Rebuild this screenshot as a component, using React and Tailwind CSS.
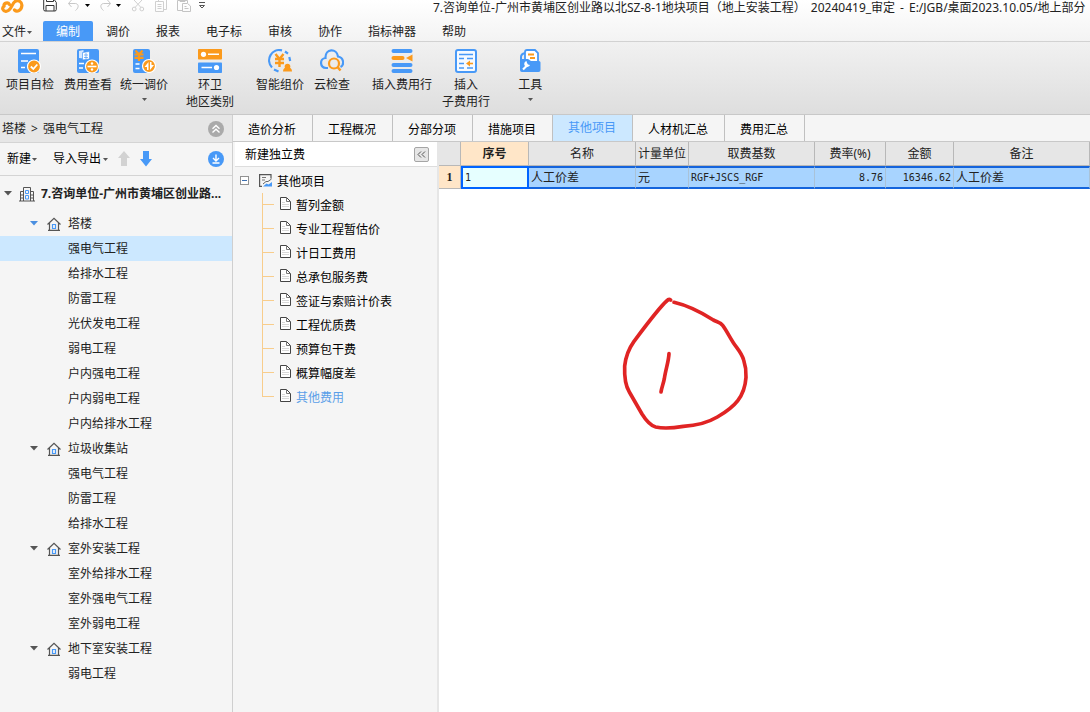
import { useState } from 'react'
import { clsx } from 'clsx'

const BLUE = '#4899f7'
const ORANGE = '#fb9a1c'

const menus = ['编制', '调价', '报表', '电子标', '审核', '协作', '指标神器', '帮助']

const tabs = ['造价分析', '工程概况', '分部分项', '措施项目', '其他项目', '人材机汇总', '费用汇总']

const projectTree = [
    {
        name: '塔楼',
        items: ['强电气工程', '给排水工程', '防雷工程', '光伏发电工程', '弱电工程', '户内强电工程', '户内弱电工程', '户内给排水工程'],
    },
    { name: '垃圾收集站', items: ['强电气工程', '防雷工程', '给排水工程'] },
    { name: '室外安装工程', items: ['室外给排水工程', '室外强电气工程', '室外弱电工程'] },
    { name: '地下室安装工程', items: ['弱电工程'] },
]

const feeItems = ['暂列金额', '专业工程暂估价', '计日工费用', '总承包服务费', '签证与索赔计价表', '工程优质费', '预算包干费', '概算幅度差', '其他费用']

const columns = ['名称', '计量单位', '取费基数', '费率(%)', '金额', '备注']

function Caret({ className = 'text-[#555]' }) {
    return (
        <svg viewBox="0 0 5 3" className={clsx('h-[3px] w-[5px] shrink-0', className)} aria-hidden="true">
            <path d="M0 0h5L2.5 3z" fill="currentColor" />
        </svg>
    )
}

function TreeArrow({ active }) {
    return (
        <svg viewBox="0 0 8 5" className={clsx('h-[5px] w-2 shrink-0', active ? 'text-[#4a8fe0]' : 'text-[#555]')} aria-hidden="true">
            <path d="M0 0h8L4 4.5z" fill="currentColor" />
        </svg>
    )
}

function Logo() {
    return (
        <svg viewBox="0 0 24 14" className="h-3.5 w-6 shrink-0" fill="none" stroke={ORANGE} strokeWidth="3.2" strokeLinecap="round" aria-hidden="true">
            <path d="M9.500 4.500C8 1.800 3.500 3 4 6.300C1.500 8 3 11.500 6 11.300C11.500 11 11.500 4 15 1.500C18.500-.5 22.500 2 21.800 6C21.300 10.500 17 12.500 14.500 10" />
        </svg>
    )
}

function QuickIcon({ label, className, children }) {
    return (
        <button type="button" aria-label={label} className={className}>
            <svg viewBox="0 0 14 12" className="h-3 w-3.5" fill="none" stroke="currentColor" aria-hidden="true">
                {children}
            </svg>
        </button>
    )
}

function QuickAccess() {
    return (
        <div className="flex w-[433px] shrink-0 items-start">
            <Logo />
            <QuickIcon label="保存" className="ml-[19px] text-[#333]">
                <path d="M.7 0v9.500q0 1.500 1.500 1.500h9.600q1.500 0 1.500-1.500V2.500L11.500 0M3.500 0v1.500h7V0M3 11V5.500h8V11" />
            </QuickIcon>
            <QuickIcon label="撤销" className="ml-2.5 text-[#c8c8c8]">
                <path d="M4.500 0 1.500 3.500 4.500 7M1.500 3.500H7c5-.5 5.500 4 1.500 7" />
            </QuickIcon>
            <Caret className="mt-1 ml-1 text-black" />
            <QuickIcon label="恢复" className="ml-2 text-[#c8c8c8]">
                <path d="M9.500 0l3 3.500-3 3.500M12.500 3.500H7c-5-.5-5.500 4-1.500 7" />
            </QuickIcon>
            <Caret className="mt-1 ml-1 text-black" />
            <QuickIcon label="剪切" className="ml-2.5 text-[#d0d0d0]">
                <path d="M3 0l7 7.500M11 0 4 7.500" />
                <circle cx="3.200" cy="9" r="1.900" />
                <circle cx="10.800" cy="9" r="1.900" />
            </QuickIcon>
            <QuickIcon label="复制" className="ml-2.5 text-[#d0d0d0]">
                <path d="M.5 1.500h8v10h-8zM3.500 1V0M11.500 0v9.500h-3M2.500 4.500h4M2.500 6.500h4M2.500 8.500h4" />
            </QuickIcon>
            <QuickIcon label="粘贴" className="ml-2 text-[#c4c4c4]">
                <path d="M5 10.500H.5V.5h10V3M3 0v1.500h5V0M5.500 3.500h5l3 2.500v5.500h-8zM7.500 6.500h2M7.500 8.500h4" />
            </QuickIcon>
            <QuickIcon label="自定义" className="ml-1 text-[#555]">
                <path d="M4 2.500h6M4.500 5.500h5L7 8z" />
            </QuickIcon>
        </div>
    )
}

const badge = <circle cx="16" cy="17.500" r="6.500" fill={ORANGE} stroke="#fff" strokeWidth="1.200" />

const ribbonIcons = {
    check: (
        <>
            <rect x="0" y="0" width="21" height="24" rx="2" fill={BLUE} />
            <path d="M3 4.500h15M3 12h7M3 18.500h4" stroke="#fff" strokeWidth="1.600" />
            {badge}
            <path d="M12.800 17.500l2.500 2.500 4-4.500" stroke="#fff" strokeWidth="1.800" fill="none" />
        </>
    ),
    view: (
        <>
            <rect x="1" y="0" width="22" height="24" rx="2" fill={BLUE} />
            <path d="M3 2l4.500-1v8.500L3 9z" fill="#d5e8ff" />
            <path d="M6.500 3.500l7-1v7.500l-7 1z" fill="#fff" stroke={BLUE} strokeWidth=".7" />
            <path d="M8 6h4M8 8.500h4M10 4v6" stroke={BLUE} strokeWidth=".7" />
            <path d="M3 14.500h5M3 19h4" stroke="#fff" strokeWidth="1.600" />
            {badge}
            <path d="M11.500 17.500h9" stroke="#fff" strokeWidth="1.600" />
            <circle cx="16" cy="14.500" r="1.200" fill="#fff" />
            <circle cx="16" cy="20.500" r="1.200" fill="#fff" />
        </>
    ),
    price: (
        <>
            <rect x="1" y="0" width="17" height="24" rx="2" fill={BLUE} />
            <path d="M3.500 1.500 7 5.500l3.500-4M7 5.500V12M2.500 5.500h9M2.500 8.800h9" stroke={ORANGE} strokeWidth="2.200" fill="none" />
            <path d="M3.500 15h4M3.500 19.500h4" stroke="#fff" strokeWidth="1.600" />
            <circle cx="17" cy="17" r="6.500" fill={ORANGE} stroke="#fff" strokeWidth="1.200" />
            <path d="M16.500 13v8H15v-3h-2.500zM18 21v-8h1.500v3H22z" fill="#fff" />
        </>
    ),
    region: (
        <>
            <rect x="0" y="0" width="24" height="10.500" rx=".8" fill={ORANGE} />
            <rect x="0" y="13.500" width="24" height="10.500" rx=".8" fill={BLUE} />
            <circle cx="5.500" cy="5.300" r="2.600" fill="#fff" />
            <circle cx="18.500" cy="18.500" r="2.600" fill="#fff" />
            <path d="M10 5.300h11M3.500 18.500H14" stroke="#fff" strokeWidth="1.600" />
        </>
    ),
    smart: (
        <>
            <g fill="none" stroke={BLUE} strokeWidth="2.200">
                <path d="M4 18.500A10.300 10.300 0 0 1 14 1.400M6 20.500l4.500 2M17 2.500l3 2.200M21.300 8l.9 4" />
            </g>
            <path d="M7.500 5l4 5 4-5M11.500 10v8M7 10h9M7 14h9" stroke={ORANGE} strokeWidth="2.400" fill="none" />
            <circle cx="19.500" cy="17.500" r="2.800" fill={ORANGE} />
            <path d="M15 22.500c0-3 2-4.500 4.500-4.500s4.500 1.500 4.500 4.500z" fill={ORANGE} />
        </>
    ),
    cloud: (
        <>
            <path d="M8 19H6C-.5 18.500-.5 9.500 5.500 9 5 -1 17 -1 18 7.500c6 1 6.500 8.500 2.500 10.500" stroke={BLUE} strokeWidth="2.200" fill="none" />
            <circle cx="14" cy="14.500" r="5" stroke={ORANGE} strokeWidth="2.200" fill="none" />
            <path d="M17.500 18l3 3.500" stroke={ORANGE} strokeWidth="2.500" />
        </>
    ),
    insertRow: (
        <>
            <path d="M3.500 2h17M3.500 16h17M3.500 22h17" stroke={BLUE} strokeWidth="4" strokeLinecap="round" />
            <path d="M3.500 9h9" stroke={ORANGE} strokeWidth="4" strokeLinecap="round" />
            <path d="M22.500 5.500v7L16 9z" fill={ORANGE} />
        </>
    ),
    insertChild: (
        <>
            <rect x="2" y="1" width="20" height="22" rx="2" stroke={BLUE} strokeWidth="2" fill="#f6faff" />
            <path d="M5 5.500h14M5 9.500h5M13 9.500h6M5 14.500h5M5 19h5M13 19h6" stroke={BLUE} strokeWidth="1.500" />
            <path d="M14 14.500h5" stroke={ORANGE} strokeWidth="1.600" />
            <path d="M12 14.500l4-3v6z" fill={ORANGE} />
        </>
    ),
    tools: (
        <>
            <path d="M3 14V8q0-3 4-4" stroke={BLUE} strokeWidth="2" fill="none" />
            <path d="M7 14V3q0-2 2-2h8l3 3v10z" stroke={BLUE} strokeWidth="1.800" fill="#fff" />
            <path d="M10 5.500h6M12 9h5" stroke={ORANGE} strokeWidth="1.800" />
            <path d="M2 12q0-2 2-2h6l3 2h8q1.500 0 1.500 1.500V21q0 2-2 2H4q-2 0-2-2z" fill={BLUE} />
            <path d="M5 20.500l4-4" stroke="#fff" strokeWidth="2.200" />
            <path d="M8.500 12a3 3 0 1 0 3.500 4l-2-.5-1-1.500z" fill="#fff" />
        </>
    ),
}

const ribbon = [
    { icon: 'check', lines: ['项目自检'], className: 'ml-1.5' },
    { icon: 'view', lines: ['费用查看'], className: 'ml-2.5' },
    { icon: 'price', lines: ['统一调价'], caret: true, className: 'ml-2' },
    { icon: 'region', lines: ['环卫', '地区类别'], className: 'ml-4.5' },
    { icon: 'smart', lines: ['智能组价'], className: 'ml-5.5' },
    { icon: 'cloud', lines: ['云检查'], className: 'ml-2.5' },
    { icon: 'insertRow', lines: ['插入费用行'], className: 'ml-5.5' },
    { icon: 'insertChild', lines: ['插入', '子费用行'], className: 'ml-2.5' },
    { icon: 'tools', lines: ['工具'], caret: true, className: 'ml-7' },
]

function RibbonButton({ item }) {
    return (
        <button type="button" className={clsx('flex shrink-0 flex-col items-center pt-[7px]', item.className)}>
            <svg viewBox="0 0 24 24" className="h-6 w-6" aria-hidden="true">{ribbonIcons[item.icon]}</svg>
            <span className="mt-[3px] leading-[17px]">
                {item.lines.map((line) => (
                    <span key={line} className="block">{line}</span>
                ))}
            </span>
            {item.caret && <Caret className="mt-[5px] text-[#555]" />}
        </button>
    )
}

function HouseIcon() {
    return (
        <svg viewBox="0 0 14 14" className="h-3.5 w-3.5 shrink-0" fill="none" aria-hidden="true">
            <path d="M.5 7.500 7 1.300l6.500 6.200M2.500 6v7.500M11.500 6v7.500M1 13.300h12" stroke="#555" strokeWidth="1.200" />
            <path d="M5.500 7.500h3v4h-3z" stroke={BLUE} strokeWidth="1.200" />
        </svg>
    )
}

function BuildingIcon() {
    return (
        <svg viewBox="0 0 16 16" className="h-4 w-4 shrink-0" fill="none" aria-hidden="true">
            <path d="M4.500 15V1.500h7V15M4.500 5.500h-3V15M11.500 5.500h3V15M0 15h16M1.500 9h3M1.500 12h3M11.500 9h3M11.500 12h3" stroke="#555" />
            <path d="M6.500 4.500h3v3h-3zM6.500 9.500h3V13h-3z" stroke={BLUE} />
        </svg>
    )
}

function DocIcon() {
    return (
        <svg viewBox="0 0 11 13" className="mb-1 h-[13px] w-[11px] shrink-0" aria-hidden="true">
            <path d="M.5.500h6l4 4v8H.5z" fill="#fff" stroke="#444" />
            <path d="M6.500 1v3.500H10" fill="none" stroke="#777" />
            <path d="M2 5.500h3M2 7.500h7M2 9.500h7" stroke="#d8d8d8" />
        </svg>
    )
}

function ProjectSidebar({ selected, onSelect }) {
    return (
        <aside className="w-[233px] shrink-0 border-r border-[#cfcfcf] bg-[#f5f5f5]">
            <div className="flex h-7 items-center border-b border-[#d4d4d4] bg-[#e6e6e6] pr-2 pl-0.5">
                <span className="flex gap-[5px]">
                    <span>塔楼</span>
                    <span>&gt;</span>
                    <span>强电气工程</span>
                </span>
                <button type="button" aria-label="收起" className="ml-auto">
                    <svg viewBox="0 0 16 16" className="h-4 w-4" fill="none" aria-hidden="true">
                        <circle cx="8" cy="8" r="8" fill="#aaa" />
                        <path d="M4.500 7.800 8 4.500l3.500 3.300M4.500 11.500 8 8.200l3.500 3.300" stroke="#fff" strokeWidth="1.400" />
                    </svg>
                </button>
            </div>
            <div className="flex h-[33px] items-center border-b border-[#d4d4d4] pr-2 pl-[7px]">
                <button type="button" className="flex items-center gap-px text-black">新建<Caret /></button>
                <button type="button" className="ml-4 flex items-center gap-0.5 text-black">导入导出<Caret /></button>
                <button type="button" aria-label="上移" className="ml-2.5">
                    <svg viewBox="0 0 12 16" className="h-4 w-3" aria-hidden="true"><path d="M6 0l6 7H9v8H3V7H0z" fill="#d2d2d2" /></svg>
                </button>
                <button type="button" aria-label="下移" className="ml-2.5">
                    <svg viewBox="0 0 12 16" className="h-4 w-3" aria-hidden="true"><path d="M3 0h6v8h3l-6 7.500L0 8h3z" fill={BLUE} /></svg>
                </button>
                <button type="button" aria-label="下载" className="ml-auto">
                    <svg viewBox="0 0 16 16" className="h-4 w-4" fill="none" stroke="#fff" strokeWidth="1.400" aria-hidden="true">
                        <circle cx="8" cy="8" r="8" fill={BLUE} stroke="none" />
                        <path d="M8 3.500V10M5 7l3 3 3-3M4.500 12h7" />
                    </svg>
                </button>
            </div>
            <button type="button" className="flex h-[35px] w-full items-center pr-1.5 pl-1 text-left font-bold">
                <TreeArrow />
                <span className="ml-[7px] flex"><BuildingIcon /></span>
                <span className="ml-1.5 truncate">7.咨询单位-广州市黄埔区创业路...</span>
            </button>
            <ul>
                {projectTree.map((group, index) => (
                    <li key={group.name}>
                        <button type="button" className="flex h-[25px] w-full items-center pl-[30px]">
                            <TreeArrow active={index === 0} />
                            <span className="mr-[7px] ml-[9px] flex"><HouseIcon /></span>
                            {group.name}
                        </button>
                        <ul>
                            {group.items.map((name) => {
                                const key = `${group.name}/${name}`
                                return (
                                    <li key={key}>
                                        <button
                                            type="button"
                                            onClick={() => onSelect(key)}
                                            className={clsx('flex h-[25px] w-full items-center pl-[68px]', selected === key && 'bg-[#cce8ff]')}
                                        >
                                            {name}
                                        </button>
                                    </li>
                                )
                            })}
                        </ul>
                    </li>
                ))}
            </ul>
        </aside>
    )
}

function FeePanel({ selected, onSelect }) {
    return (
        <section className="w-[206px] shrink-0 border-r-2 border-[#e6e6e6] bg-[#f5f5f5] text-black">
            <div className="ml-0.5 flex h-[25px] items-center border-b border-[#ddd] bg-white pr-2 pl-2.5">
                <button type="button" className="pt-0.5">新建独立费</button>
                <button type="button" aria-label="折叠" className="ml-auto flex h-[15px] w-[15px] items-center justify-center rounded-xs border border-[#a5a5a5] bg-[#e6e6e6]">
                    <svg viewBox="0 0 9 7" className="h-[7px] w-[9px]" fill="none" stroke="#555" aria-hidden="true">
                        <path d="M4 .5l-3 3 3 3M8 .5l-3 3 3 3" />
                    </svg>
                </button>
            </div>
            <div className="mt-px flex h-[25px] items-center pl-[7px]">
                <button type="button" aria-label="展开" className="flex h-[9px] w-[9px] items-center justify-center border border-[#929292] bg-white">
                    <span className="h-px w-[5px] bg-[#3c6fb0]" />
                </button>
                <svg viewBox="0 0 13 13" className="ml-2.5 h-[13px] w-[13px]" fill="none" aria-hidden="true">
                    <path d="M12 4.500V.6H.6v11.800H3" stroke="#555" strokeWidth="1.200" />
                    <path d="M3 3.500h4M3 6h3" stroke="#777" />
                    <path d="M4 12.500 7.500 9.500l2 1L13 8v4.500z" fill={BLUE} />
                    <path d="M4 10 7 7.500h2L12.500 5" stroke="#666" />
                </svg>
                <span className="ml-[5px] pt-0.5">其他项目</span>
            </div>
            <ul className="pl-[29px]">
                {feeItems.map((name, index) => (
                    <li key={name} className="flex h-6">
                        <span className="flex w-3 flex-col">
                            <span className="h-3 border-b border-l border-[#f8cd8c]" />
                            {index < feeItems.length - 1 && <span className="h-3 border-l border-[#f8cd8c]" />}
                        </span>
                        <button
                            type="button"
                            onClick={() => onSelect(name)}
                            className={clsx('ml-1.5 flex items-center gap-[5px]', selected === name && 'text-[#5b9fe8]')}
                        >
                            <DocIcon />
                            <span className="pt-0.5">{name}</span>
                        </button>
                    </li>
                ))}
            </ul>
        </section>
    )
}

const headCell = 'h-6 border-r border-b border-[#b8b8b8] bg-[#e6e6e6] p-0 font-normal'
const bodyCell = 'h-[23px] border-y-2 border-y-[#1464dc] border-r border-r-[#a9c2d8] bg-[#a8d4ff] px-0.5 py-0 whitespace-nowrap'
const mono = "font-['DejaVu_Sans_Mono','Noto_Sans_CJK_SC',monospace] text-[10px]"

function FeeTable() {
    return (
        <table className="w-full table-fixed border-separate border-spacing-0">
            <colgroup>
                <col className="w-[22px]" />
                <col className="w-[68px]" />
                <col className="w-[107px]" />
                <col className="w-[53px]" />
                <col className="w-[126px]" />
                <col className="w-[71px]" />
                <col className="w-[68px]" />
                <col />
            </colgroup>
            <thead>
                <tr>
                    <td className={headCell} />
                    <th className="h-6 border-r border-b border-[#b8b8b8] bg-[#ffe6c8] p-0 font-bold">序号</th>
                    {columns.map((name) => (
                        <th key={name} className={headCell}>{name}</th>
                    ))}
                </tr>
            </thead>
            <tbody>
                <tr>
                    <th className="border-r border-b border-[#b8b8b8] bg-[#ffe6c8] p-0 font-['Liberation_Serif',serif] text-xs font-bold">1</th>
                    <td className={clsx('border-2 border-[#0064ff] bg-[#e6ffff] px-0.5 py-0', mono)}>1</td>
                    <td className={bodyCell}>人工价差</td>
                    <td className={bodyCell}>元</td>
                    <td className={clsx(bodyCell, mono)}>RGF+JSCS_RGF</td>
                    <td className={clsx(bodyCell, mono, 'text-right')}>8.76</td>
                    <td className={clsx(bodyCell, mono, 'text-right')}>16346.62</td>
                    <td className={bodyCell}>人工价差</td>
                </tr>
            </tbody>
        </table>
    )
}

// red pen mark lying over the empty part of the grid
function PenMark() {
    return (
        <svg
            viewBox="0 0 510 510"
            className="pointer-events-none absolute top-[138px] left-[161px] h-[170px] w-[170px]"
            fill="none"
            stroke="#e02424"
            strokeWidth="11"
            strokeLinecap="round"
            strokeLinejoin="round"
            aria-hidden="true"
        >
            <path d="M222 67C270 78 305 98 340 120C352 126 361 127 368 136C380 152 388 170 400 188C412 206 425 218 431 240C437 258 439 275 438 292C434 350 405 380 352 411C320 430 285 437 250 439C220 444 190 446 167 441C148 436 136 418 126 402L88 336C75 315 73 285 74 258C77 230 87 205 102 184C135 140 178 82 200 63Q206 56 212 60" />
            <path d="M207 221C206 245 197 268 193 296C190 312 185 322 183 336" />
        </svg>
    )
}

export default function App() {
    const [menu, setMenu] = useState('编制')
    const [tab, setTab] = useState('其他项目')
    const [node, setNode] = useState('塔楼/强电气工程')
    const [fee, setFee] = useState('其他费用')

    return (
        <div className="flex h-screen flex-col overflow-hidden bg-white font-['Noto_Sans','Noto_Sans_CJK_SC',sans-serif] text-xs text-[#222]">
            <header className="shrink-0 border-b border-[#d2d2d2] bg-linear-to-b from-white to-[#f3f3f3]">
                <div className="flex h-[21px] items-start">
                    <QuickAccess />
                    <h1 className="flex gap-[5px] leading-4 whitespace-nowrap">
                        <span>7.咨询单位-广州市黄埔区创业路以北SZ-8-1地块项目（地上安装工程）</span>
                        <span>20240419_审定</span>
                        <span>-</span>
                        <span>E:/JGB/桌面2023.10.05/地上部分</span>
                    </h1>
                </div>
                <nav className="flex h-5">
                    <button type="button" className="flex w-[43px] items-center gap-px pt-0.5 pl-0.5">文件<Caret /></button>
                    {menus.map((name) => (
                        <button
                            key={name}
                            type="button"
                            onClick={() => setMenu(name)}
                            className={clsx('px-[13px] pt-0.5', menu === name && 'rounded-t-xs bg-[#4899f7] text-white')}
                        >
                            {name}
                        </button>
                    ))}
                </nav>
            </header>

            <div className="flex h-[73px] shrink-0 items-start border-b border-[#c8c8c8] bg-linear-to-b from-[#f1f1f1] to-[#dedede]">
                {ribbon.map((item) => (
                    <RibbonButton key={item.icon} item={item} />
                ))}
            </div>

            <div className="flex min-h-0 flex-1">
                <ProjectSidebar selected={node} onSelect={setNode} />
                <main className="flex min-w-0 flex-1 flex-col">
                    <div className="flex h-[27px] shrink-0 border-b border-[#c8c8c8] bg-[#f5f5f5]">
                        {tabs.map((name) => (
                            <button
                                key={name}
                                type="button"
                                onClick={() => setTab(name)}
                                className={clsx(
                                    'border-r border-[#c0c0c0] pr-4 pl-[15px]',
                                    tab === name ? 'bg-[#cce8ff] text-[#4899f7]' : 'pt-[3px] text-black'
                                )}
                            >
                                {name}
                            </button>
                        ))}
                    </div>
                    <div className="flex min-h-0 flex-1">
                        <FeePanel selected={fee} onSelect={setFee} />
                        <div className="relative min-w-0 flex-1">
                            <FeeTable />
                            <PenMark />
                        </div>
                    </div>
                </main>
            </div>
        </div>
    )
}
